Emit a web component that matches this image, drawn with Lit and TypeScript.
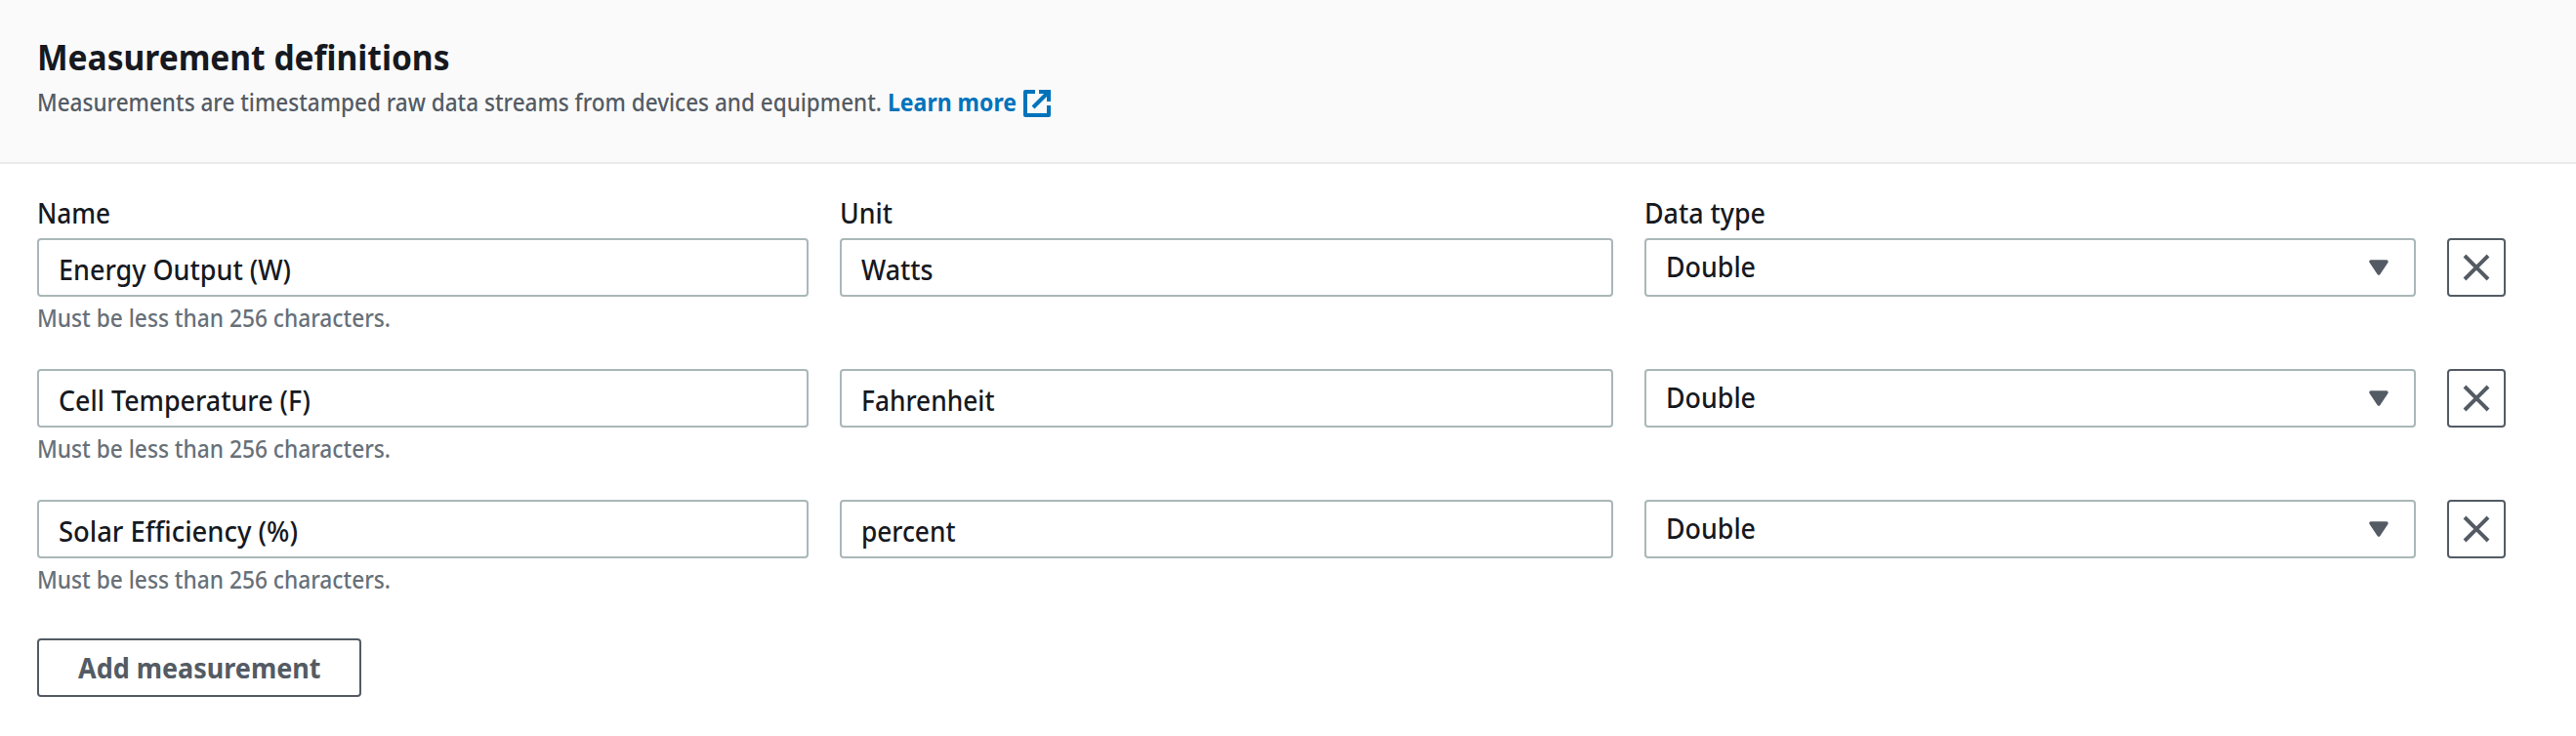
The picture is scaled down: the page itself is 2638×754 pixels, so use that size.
import { LitElement, html, css, svg } from 'lit';
import { customElement, property, state } from 'lit/decorators.js';
import { styleMap } from 'lit/directives/style-map.js';

/** One line of text set to a given advance width. */
@customElement('fit-text')
class FitText extends LitElement {
  @property({ type: Number }) width = 0;
  @state() private ratio = 1;
  static styles = css`
    :host { display: block; white-space: nowrap; }
    .line { display: inline-block; transform-origin: 0 50%; }
  `;
  firstUpdated() {
    const line = this.renderRoot.querySelector('.line') as HTMLElement;
    this.ratio = this.width / line.getBoundingClientRect().width;
  }
  render() {
    return html`<span class="line" style=${styleMap({ transform: `scaleX(${this.ratio})` })}><slot></slot></span>`;
  }
}

interface Row { name: string; nameW: number; unit: string; unitW: number; }

const ROWS: Row[] = [
  { name: 'Energy Output (W)', nameW: 238, unit: 'Watts', unitW: 73.5 },
  { name: 'Cell Temperature (F)', nameW: 258, unit: 'Fahrenheit', unitW: 136.5 },
  { name: 'Solar Efficiency (%)', nameW: 245, unit: 'percent', unitW: 96.5 },
];

@customElement('app-root')
class AppRoot extends LitElement {
  static styles = css`
    :host { display: block; height: 754px; background: #fff; color: #16191f;
      font: 500 28px/44px "Noto Sans", "Open Sans", sans-serif; }
    .header { box-sizing: border-box; height: 168px; padding: 37px 38px 0; background: #fafafa; border-bottom: 2px solid #eaeaeb; }
    h2 { margin: 0; font-size: 35px; line-height: 44px; font-weight: 700; }
    .desc { display: flex; margin-top: 6px; font-size: 24.5px; line-height: 36px; color: #545b64; }
    .desc fit-text { width: 870.5px; }
    .link { display: flex; color: #0073bb; font-weight: 700; text-decoration: none; }
    .link fit-text { width: 137.5px; }
    .link svg { width: 32px; height: 32px; margin-top: 3px; }
    .body { padding: 27.5px 72px 0 38px; }
    .grid { display: grid; grid-template-columns: 790fr 792fr 790fr 60px; column-gap: 32px; }
    .labels { height: 48.5px; }
    .row { height: 134px; align-items: start; }
    .box { box-sizing: border-box; height: 60px; border: 2px solid #aab7b8; border-radius: 4px; background: #fff;
      line-height: 56px; padding: 2px 0 0 20px; }
    .select { display: flex; justify-content: space-between; padding: 0 26px 0 19.5px; line-height: 55px; }
    .select svg { width: 20px; height: 16px; margin-top: 20px; }
    .hint { margin-top: 5.5px; font-size: 24.5px; line-height: 32px; color: #687078; }
    button { box-sizing: border-box; height: 60px; border: 2px solid #545b64; border-radius: 4px; background: #fff;
      color: #545b64; font: inherit; font-weight: 700; padding: 0; display: block; text-align: left; }
    .remove { width: 60px; }
    .remove svg { display: block; width: 32px; height: 32px; margin: 0 auto; }
    .add { width: 332px; padding: 0 0 1px 40px; margin-top: 8px; }
  `;

  private caret = svg`<svg viewBox="0 0 20 16"><path d="M2 2h16l-8 12z" fill="#545b64" stroke="#545b64" stroke-width="3.4" stroke-linejoin="round"/></svg>`;

  private row(r: Row) {
    return html`<div class="grid row">
      <div>
        <div class="box"><fit-text .width=${r.nameW}>${r.name}</fit-text></div>
        <div class="hint"><fit-text .width=${362}>Must be less than 256 characters.</fit-text></div>
      </div>
      <div class="box"><fit-text .width=${r.unitW}>${r.unit}</fit-text></div>
      <div class="box select"><fit-text .width=${92}>Double</fit-text>${this.caret}</div>
      <button class="remove" aria-label="Remove"><svg viewBox="0 0 16 16"><path d="M2 2l12 12M14 2L2 14" fill="none" stroke="#545b64" stroke-width="2"/></svg></button>
    </div>`;
  }

  render() {
    return html`
      <div class="header">
        <h2><fit-text .width=${422.5}>Measurement definitions</fit-text></h2>
        <div class="desc">
          <fit-text .width=${865}>Measurements are timestamped raw data streams from devices and equipment.</fit-text>
          <a class="link"><fit-text .width=${132}>Learn more</fit-text><svg viewBox="0 0 16 16" fill="none" stroke="#0073bb" stroke-width="2" stroke-linejoin="round"><path d="M9 2h5v5" stroke-linejoin="miter"/><path d="M6 10l8-8"/><path d="M14 9v5H2V2h5"/></svg></a>
        </div>
      </div>
      <div class="body">
        <div class="grid labels">
          <fit-text .width=${75}>Name</fit-text>
          <fit-text .width=${54}>Unit</fit-text>
          <fit-text .width=${124}>Data type</fit-text>
        </div>
        ${ROWS.map((r) => this.row(r))}
        <button class="add"><fit-text .width=${248.5}>Add measurement</fit-text></button>
      </div>`;
  }
}
